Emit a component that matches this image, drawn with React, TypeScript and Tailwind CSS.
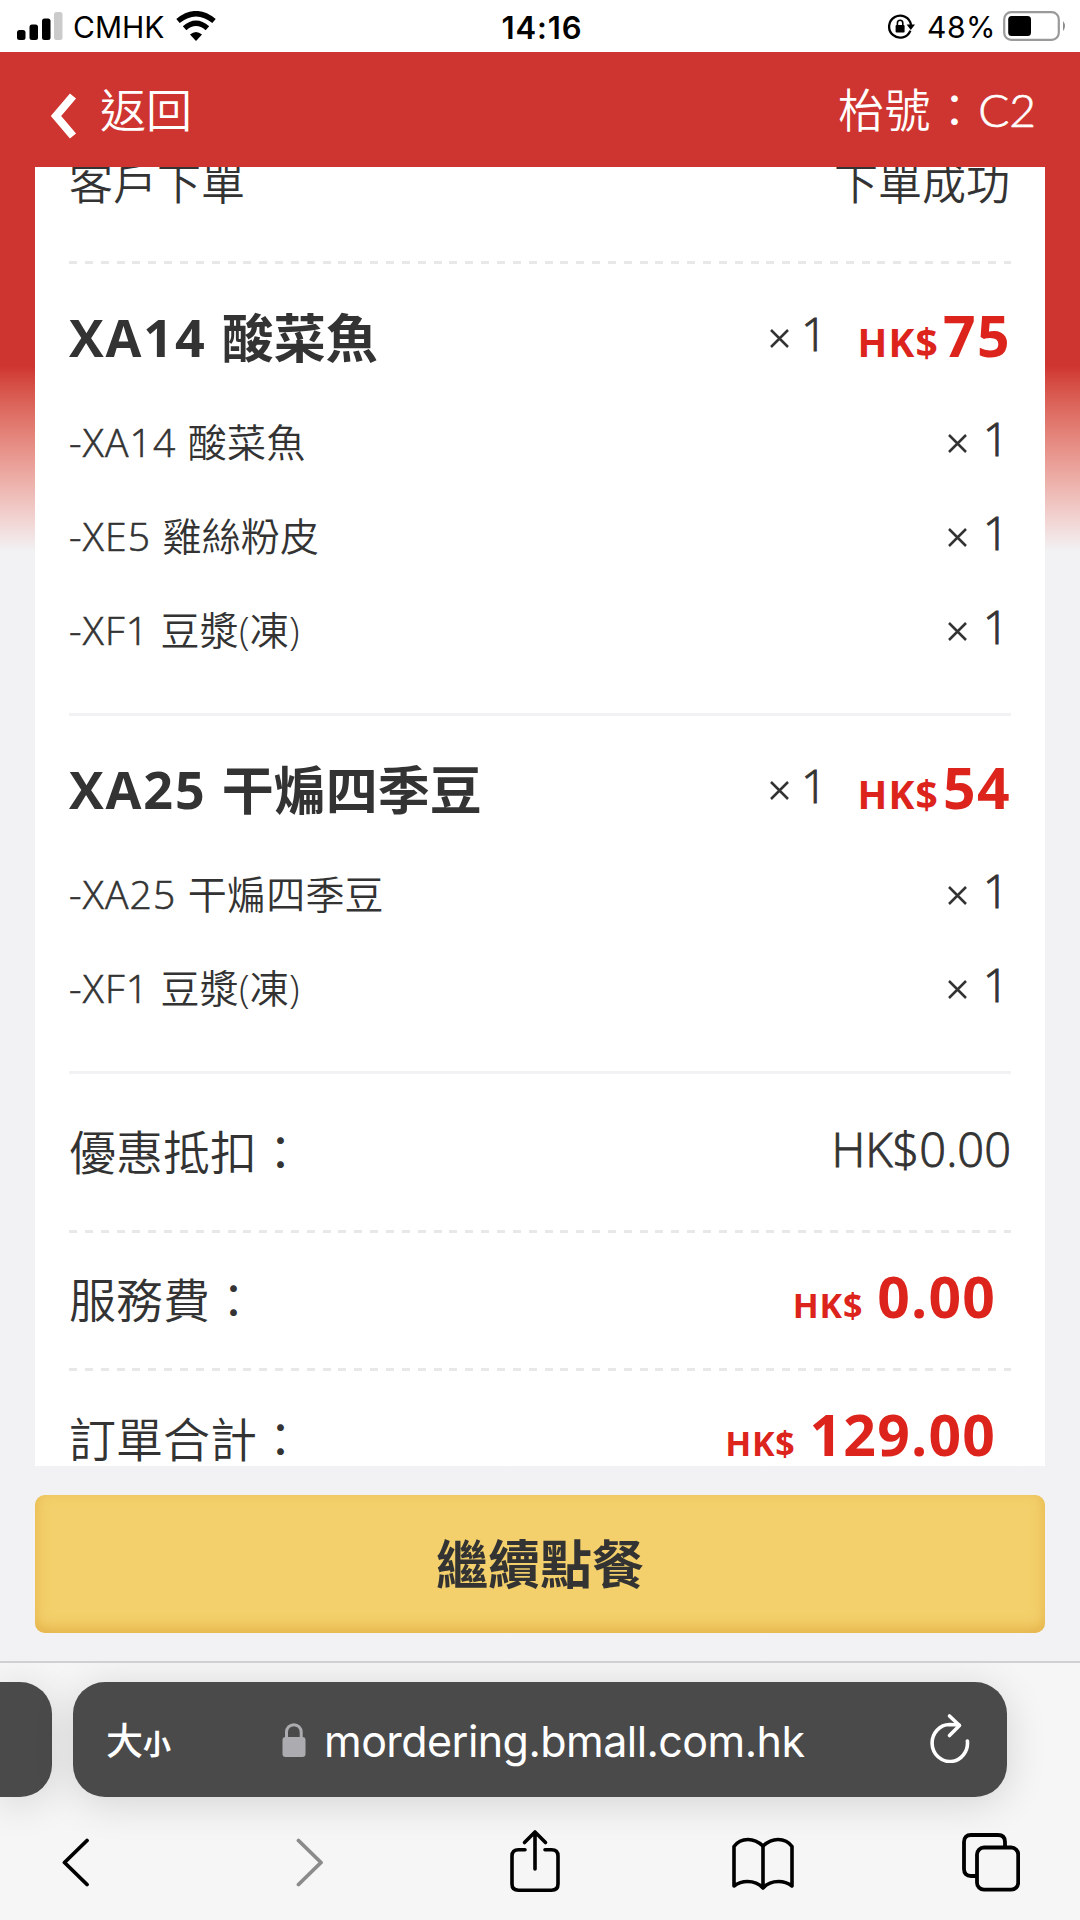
import React from 'react'

const orderItems = [
    {
        id: 1,
        code: "XA14",
        name: "酸菜魚",
        price: "75",
        parts: [
            { code: "-XA14", name: "酸菜魚" },
            { code: "-XE5", name: "雞絲粉皮" },
            { code: "-XF1", name: "豆漿(凍)" },
        ],
    },
    {
        id: 2,
        code: "XA25",
        name: "干煸四季豆",
        price: "54",
        parts: [
            { code: "-XA25", name: "干煸四季豆" },
            { code: "-XF1", name: "豆漿(凍)" },
        ],
    },
];

const StatusBar = () => (
    <div className="flex h-[52px] shrink-0 items-center bg-white pl-[17px] pr-[13px] font-['Inter',sans-serif] text-[30px] leading-none text-black">
        <div className="flex flex-1 items-center">
            <svg width="46" height="28" viewBox="0 0 46 28" className="mb-px">
                <rect x="0" y="18" width="8.5" height="10" rx="2.5" />
                <rect x="12.5" y="12.5" width="8.5" height="15.5" rx="2.5" />
                <rect x="25" y="6.5" width="8.5" height="21.5" rx="2.5" />
                <rect x="37" y="0" width="8.5" height="28" rx="2.5" fill="#cbcbcb" />
            </svg>
            <span className="ml-[10px] mt-0.5">CMHK</span>
            <svg width="40" height="30" viewBox="0 0 40 30" className="ml-3 mb-px">
                <path d="M20 30 L14 23.6 Q20 18.6 26 23.6Z" />
                <path d="M8.6 17.2 Q20 7.2 31.4 17.2" fill="none" stroke="black" strokeWidth="5.4" />
                <path d="M2 10 Q20 -4.6 38 10" fill="none" stroke="black" strokeWidth="5.4" />
            </svg>
        </div>
        <span className="mt-0.5 text-[31px] font-semibold tracking-[0.9px]">14:16</span>
        <div className="flex flex-1 items-center justify-end">
            <svg width="28" height="27" viewBox="0 0 28 27" fill="none">
                <path d="M23.4 17.6 A11 11 0 1 1 24 12" stroke="black" strokeWidth="2.3" />
                <path d="M19.6 11.5 H28 L23.8 17Z" fill="black" />
                <rect x="8.6" y="12" width="9" height="7.4" rx="1" fill="black" />
                <path d="M10.4 12.5 V10 A2.7 2.7 0 0 1 15.8 10 V12.5" stroke="black" strokeWidth="1.6" />
            </svg>
            <span className="ml-3 mt-0.5 tracking-[0.5px]">48%</span>
            <svg width="64" height="30" viewBox="0 0 64 30" fill="none" className="ml-[7px]">
                <rect x="1.2" y="1.2" width="54.6" height="27.6" rx="7" stroke="#9a9a9a" strokeWidth="2.2" />
                <rect x="5.2" y="5" width="22.8" height="20" rx="3.5" fill="black" />
                <path d="M60 10 Q64 15 60 20Z" fill="#8c8c8c" />
            </svg>
        </div>
    </div>
);

const Header = () => (
    <div className="flex h-[115px] shrink-0 items-center justify-between pl-[51px] pr-[44px] text-[46px] font-[350] leading-[60px] text-white">
        <div className="flex items-center">
            <svg width="26" height="46" viewBox="0 0 26 46" className="mt-[13px]">
                <path d="M22 3 L5 23 L22 43" fill="none" stroke="white" strokeWidth="8" />
            </svg>
            <span className="-mt-0.5 ml-[23px]">返回</span>
        </div>
        <span className="-mt-[3px] font-['Noto_Sans_CJK_TC',sans-serif] tracking-[0.8px]">
            枱號：<span className="font-['Lato',sans-serif] font-light tracking-normal [-webkit-text-stroke:0.7px]">C2</span>
        </span>
    </div>
);

const Quantity = ({ className }: { className?: string }) => (
    <span className={`flex items-center text-[46px] font-light leading-[58px] ${className}`}>
        <svg width="19" height="19" viewBox="0 0 19 19" className="mt-1.5">
            <path d="M1 1 L18 18 M18 1 L1 18" stroke="currentColor" strokeWidth="2.5" />
        </svg>
        <span className="-mt-[5px] [-webkit-text-stroke:0.9px]">1</span>
    </span>
);

const Dashes = () => (
    <div className="h-[3px] shrink-0 bg-[repeating-linear-gradient(90deg,#e8e8e8_0_8px,transparent_8px_15.85px)]" />
);

const Amount = ({ value }: { value: string }) => (
    <span className="-mt-px flex items-baseline pr-[15px] font-bold leading-[58px] text-[#dc241c]">
        <span className="text-[34px] tracking-[0.8px]">HK$</span>
        <span className="ml-[14px] text-[57px] tracking-[1.2px]">{value}</span>
    </span>
);

const OrderCard = () => (
    <div className="mx-[35px] flex h-[1299px] shrink-0 flex-col overflow-hidden bg-white px-[34px] font-[350]">
        <div className="-mt-1.5 flex h-[100px] shrink-0 justify-between pr-px text-[44px] leading-[44px]">
            <span>客戶下單</span>
            <span>下單成功</span>
        </div>
        <Dashes />

        {orderItems.map((item) => (
            <div key={item.id} className="shrink-0">
                <div className="mt-[42px] flex h-[60px] items-baseline leading-[58px]">
                    <span className="flex items-baseline gap-[15px] text-[52px] font-bold">
                        <span className="tracking-[1.9px]">{item.code}</span>
                        <span className="relative top-px">{item.name}</span>
                    </span>
                    <Quantity className="relative -top-[9px] ml-auto gap-3" />
                    <span className="ml-[30px] flex items-baseline font-bold text-[#dc241c]">
                        <span className="text-[39px] tracking-[1.2px]">HK$</span>
                        <span className="ml-1 text-[57px] tracking-[1.4px]">{item.price}</span>
                    </span>
                </div>
                <div className="mb-[36px] mt-[29px]">
                    {item.parts.map((part) => (
                        <div key={part.code} className="flex h-[94px] items-center justify-between text-[39px]">
                            <span>
                                <span className="tracking-[1.2px] [-webkit-text-stroke:0.6px]">{part.code} </span>
                                <span className="tracking-[0.2px]">{part.name}</span>
                            </span>
                            <Quantity className="-mt-1 gap-4 pr-0.5" />
                        </div>
                    ))}
                </div>
                <div className="h-[3px] bg-[#f2f2f4]" />
            </div>
        ))}

        <div className="flex h-[156px] shrink-0 items-center justify-between text-[47px]">
            <span>優惠抵扣：</span>
            <span className="-mt-1.5 font-light [-webkit-text-stroke:0.9px]">HK$0.00</span>
        </div>
        <Dashes />
        <div className="flex h-[135px] shrink-0 items-center justify-between text-[47px]">
            <span>服務費：</span>
            <Amount value="0.00" />
        </div>
        <Dashes />
        <div className="flex h-[136px] shrink-0 items-center justify-between text-[47px]">
            <span>訂單合計：</span>
            <Amount value="129.00" />
        </div>
    </div>
);

const BrowserBar = () => (
    <div className="flex h-[259px] shrink-0 flex-col overflow-hidden border-t-2 border-[#d0d0d2] bg-[#f6f6f6]">
        <div className="mt-[19px] flex h-[115px] shrink-0 gap-[21px]">
            <div className="w-[52px] rounded-r-[32px] bg-[#4a4a4a] shadow-[0_6px_40px_rgba(0,0,0,0.14)]" />
            <div className="flex w-[934px] items-center rounded-[32px] bg-[#4a4a4a] pl-[33px] pr-[37px] text-white shadow-[0_6px_40px_rgba(0,0,0,0.14)]">
                <span className="flex items-baseline font-['Noto_Sans_CJK_TC',sans-serif] font-medium">
                    <span className="text-[37px]">大</span>
                    <span className="text-[28px] font-bold">小</span>
                </span>
                <svg width="24" height="34" viewBox="0 0 24 34" className="ml-[111px]">
                    <rect x="0.5" y="14" width="23" height="20" rx="3" fill="#acacb0" />
                    <path d="M4.5 15 V9 A7.3 7.3 0 0 1 19.2 9 V15" fill="none" stroke="#acacb0" strokeWidth="3" />
                </svg>
                <span className="ml-[18px] mt-1 font-['Inter',sans-serif] text-[43px] tracking-[-0.55px]">mordering.bmall.com.hk</span>
                <svg width="40" height="50" viewBox="0 0 40 50" fill="none" stroke="white" strokeWidth="3.6" strokeLinecap="round" strokeLinejoin="round" className="mb-1 ml-auto">
                    <path d="M37.4 28 A17.7 18.5 0 1 1 19.7 11.5 L29 12" />
                    <path d="M19.5 3 L29.5 12.5 L19.5 22.5" />
                </svg>
            </div>
        </div>
        <div className="mt-[31px] flex items-start pl-[62px] text-black">
            <svg width="28" height="64" viewBox="0 0 28 64" fill="none" stroke="black" strokeWidth="3.8" strokeLinecap="round" strokeLinejoin="round">
                <path d="M25 12.5 L2.5 34.5 L25 56.5" />
            </svg>
            <svg width="28" height="64" viewBox="0 0 28 64" fill="none" stroke="#8b8b8b" strokeWidth="3.8" strokeLinecap="round" strokeLinejoin="round" className="ml-[206px]">
                <path d="M2.5 12.5 L25 34.5 L2.5 56.5" />
            </svg>
            <svg width="50" height="66" viewBox="0 0 50 66" fill="none" stroke="black" strokeWidth="3.6" strokeLinecap="round" strokeLinejoin="round" className="ml-[186px]">
                <path d="M15 21.8 H8.5 Q2 21.8 2 28 V56 Q2 62.2 8.5 62.2 H41.5 Q48 62.2 48 56 V28 Q48 21.8 41.5 21.8 H35" />
                <path d="M25 41 V4 M14.5 14.5 L25 4 L35.5 14.5" />
            </svg>
            <svg width="62" height="64" viewBox="0 0 62 64" fill="none" stroke="black" strokeWidth="3.6" strokeLinecap="round" strokeLinejoin="round" className="ml-[172px]">
                <path d="M31 18 Q24 11.5 16 11.5 Q7 11.5 2 18.5 V58 Q8 53.5 15.5 53.5 Q25 53.5 31 60 Q37 53.5 46.5 53.5 Q54 53.5 60 58 V18.5 Q55 11.5 46 11.5 Q38 11.5 31 18Z" />
                <path d="M31 18 V59" />
            </svg>
            <svg width="58" height="66" viewBox="0 0 58 66" fill="none" stroke="black" strokeWidth="3.8" className="ml-[168px]">
                <path d="M14 48 H9 Q2 48 2 41 V14 Q2 7 9 7 H36 Q43 7 43 14 V19" />
                <rect x="15" y="19.5" width="41.2" height="42.2" rx="7" />
            </svg>
        </div>
    </div>
);

const App = () => {
    return (
        <div className="flex h-[1920px] w-[1080px] flex-col overflow-hidden bg-[#f2f2f5] font-['Open_Sans','Noto_Sans_CJK_TC',sans-serif] text-[#333333]">
            <StatusBar />
            <div className="flex h-[1609px] shrink-0 flex-col bg-linear-to-b from-[#cf3530] from-[314px] to-[#f2f2f5] to-[500px]">
                <Header />
                <OrderCard />
                <button className="mx-[35px] mt-[29px] h-[138px] shrink-0 rounded-[10px] bg-[#f3d06b] text-[52px] font-bold shadow-[inset_0_-5px_14px_#e5b24a]">
                    繼續點餐
                </button>
            </div>
            <BrowserBar />
        </div>
    )
}

export default App
